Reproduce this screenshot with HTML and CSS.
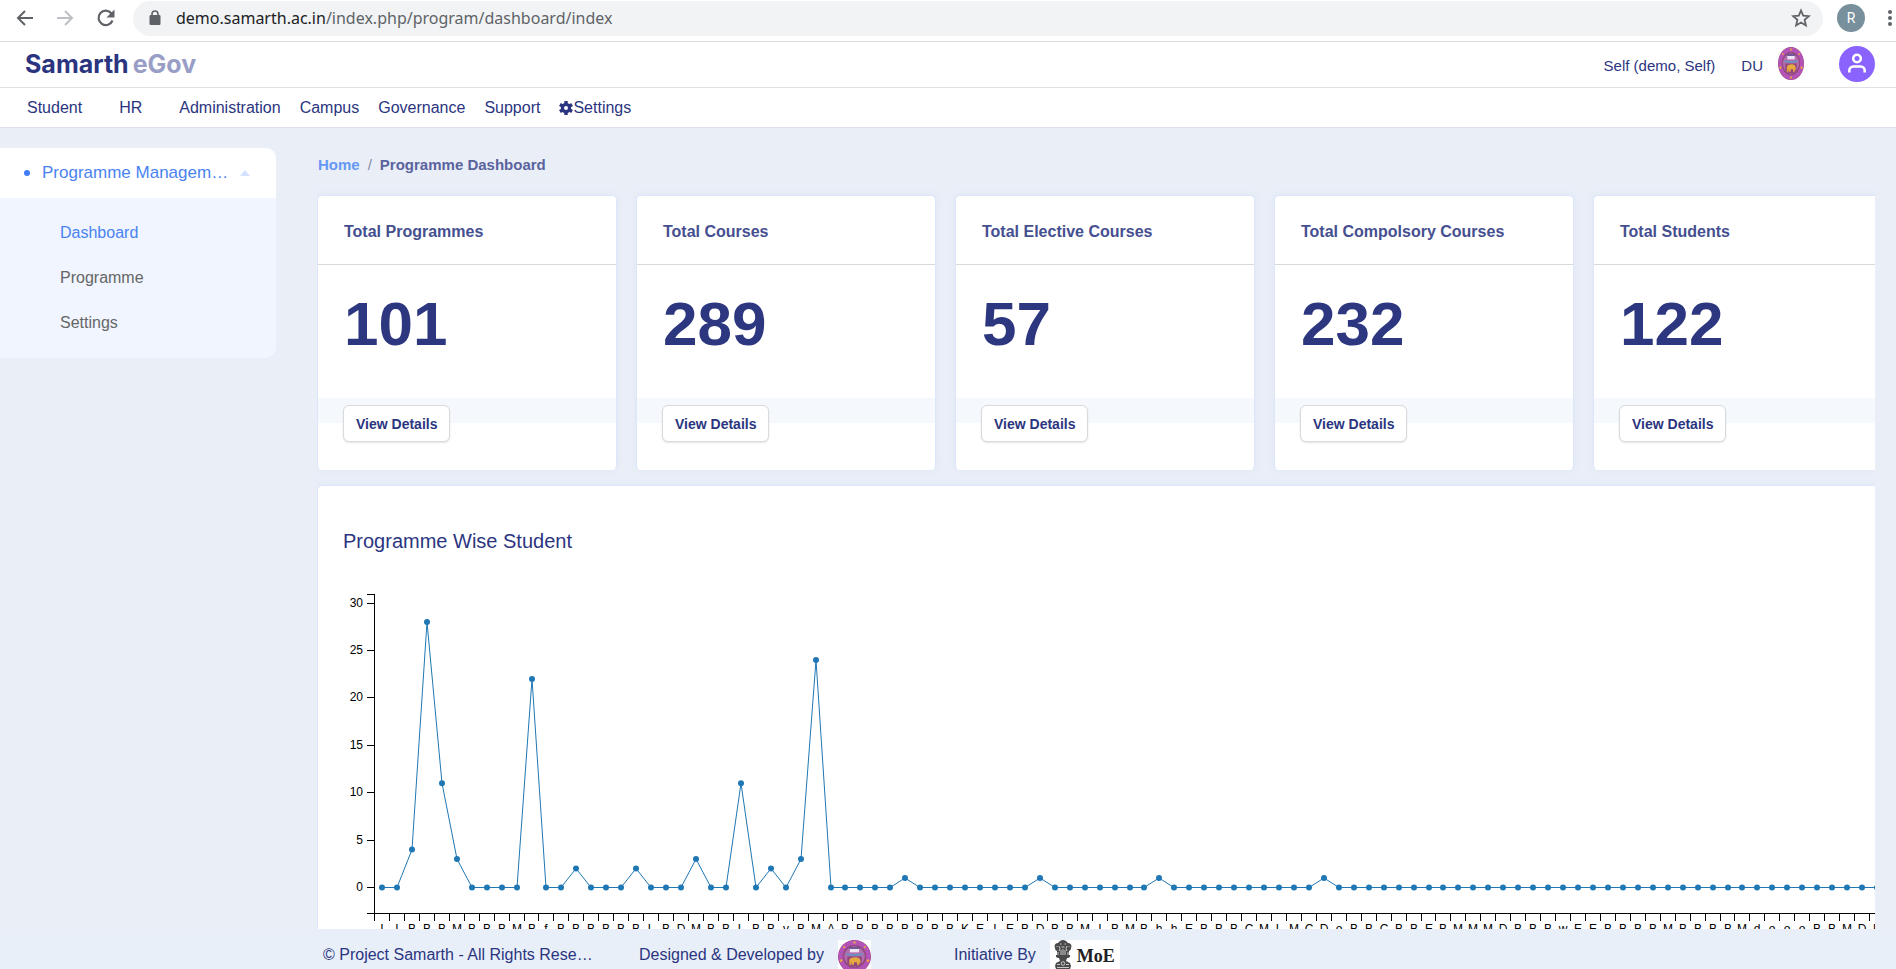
FILE: index.html
```html
<!DOCTYPE html>
<html lang="en">
<head>
<meta charset="utf-8">
<title>Programme Dashboard</title>
<link rel="stylesheet" href="styles.css">
</head>
<body>
<svg class="sprite" aria-hidden="true">
  <symbol id="crest" viewBox="0 0 32 32" preserveAspectRatio="none">
    <circle cx="16" cy="16" r="16" fill="#9a4a86"/>
    <circle cx="16" cy="16" r="13.500" fill="none" stroke="#c050bd" stroke-width="4"/>
    <circle cx="16" cy="16" r="13.500" fill="none" stroke="#9b5bb0" stroke-width="2" stroke-dasharray="1.500 1.500"/>
    <circle cx="16" cy="16" r="10.500" fill="#b56cae" stroke="#8b4a7c"/>
    <circle cx="16" cy="2.500" r="1.200" fill="#e0a050"/><circle cx="3" cy="20" r="1.300" fill="#e8a33a"/><circle cx="29" cy="20" r="1.300" fill="#e8a33a"/><circle cx="6" cy="7" r="1.100" fill="#e0a050"/><circle cx="26" cy="7" r="1.100" fill="#e0a050"/><circle cx="16" cy="29.500" r="1.200" fill="#e8a33a"/>
    <path d="M11.500 8.500h9v3.500h-9z" fill="#efe4f4"/><path d="M11 7h10v1.500H11z" fill="#5b4d8c"/>
    <path d="M8 12.500q8 2 16 0v2q-8 2-16 0z" fill="#6a93c0"/>
    <path d="M9 16h14v7q-7 5-14 0z" fill="#93467a"/>
    <path d="M11 24v-4.500q.5-2.500 4-2.500 5-1 6.500 2l.5 3-1.500.5V24h-2v-2.500h-3V24h-2v-3l-.8 3z" fill="#e5a93f"/>
  </symbol>
</svg>

<div class="browser">
  <button class="icon-btn" aria-label="Back"><svg width="18" height="18" viewBox="0 0 18 18" fill="none" stroke="#5f6368" stroke-width="2"><path d="M17 9H2M9 2L2 9l7 7"/></svg></button>
  <button class="icon-btn" aria-label="Forward"><svg width="18" height="18" viewBox="0 0 18 18" fill="none" stroke="#bdc1c6" stroke-width="2"><path d="M1 9h15M9 2l7 7-7 7"/></svg></button>
  <button class="icon-btn reload" aria-label="Reload"><svg width="20" height="20" viewBox="0 0 20 20"><path d="M16.500 12.500A7.200 7.200 0 1 1 15.500 5.500" fill="none" stroke="#5f6368" stroke-width="2.200"/><path d="M18.500 1.500v8h-8z" fill="#5f6368"/></svg></button>
  <div class="address">
    <svg width="12" height="16" viewBox="0 0 12 16"><rect x="0.500" y="5" width="11" height="10" rx="1.200" fill="#5f6368"/><path d="M3 6V4a3 3 0 0 1 6 0v2" fill="none" stroke="#5f6368" stroke-width="1.600"/></svg>
    <div class="url"><span class="host">demo.samarth.ac.in</span>/index.php/program/dashboard/index</div>
    <button class="icon-btn star" aria-label="Bookmark"><svg width="20" height="20" viewBox="0 0 20 20" fill="none" stroke="#5f6368" stroke-width="1.800"><path d="M10 2.500l2.200 5.200 5.600.5-4.200 3.700 1.300 5.500L10 14.500l-4.900 2.900 1.300-5.500L2.200 8.200l5.600-.5z"/></svg></button>
  </div>
  <div class="profile">R</div>
  <button class="icon-btn more" aria-label="Menu"><svg width="6" height="18" viewBox="0 0 6 18" fill="#5f6368"><circle cx="3" cy="3" r="2"/><circle cx="3" cy="9" r="2"/><circle cx="3" cy="15" r="2"/></svg></button>
</div>

<header class="topbar">
  <a class="brand" href="#"><span>Samarth</span><span class="brand-light">eGov</span></a>
  <div class="account">
    <span class="who">Self (demo, Self)</span>
    <span class="org">DU</span>
    <span class="org-logo"><svg width="26" height="33" viewBox="0 0 32 32" preserveAspectRatio="none" role="img" aria-label="DU crest"><use href="#crest"/></svg></span>
    <button class="avatar" aria-label="Account"><svg width="36" height="36" viewBox="0 0 36 36" fill="none" stroke="#fff" stroke-width="2.600"><circle cx="18" cy="12.500" r="3.800"/><path d="M10.300 26.500v-2a4 4 0 0 1 4-4h7.400a4 4 0 0 1 4 4v2"/></svg></button>
  </div>
</header>

<nav class="menu">
  <a class="wide" href="#">Student</a>
  <a class="wide" href="#">HR</a>
  <a href="#">Administration</a>
  <a href="#">Campus</a>
  <a href="#">Governance</a>
  <a href="#">Support</a>
  <a class="with-icon" href="#"><svg width="14" height="14" viewBox="0 0 14 14"><path fill="none" stroke="#2b357f" stroke-width="3.400" d="M7 0v14M.9 3.500l12.200 7M.9 10.500l12.200-7"/><circle cx="7" cy="7" r="3.600" fill="#fff" stroke="#2b357f" stroke-width="3.200"/></svg>Settings</a>
</nav>

<div class="layout">
  <aside class="sidebar">
    <button class="group" aria-expanded="true"><span class="dot"></span><span class="group-name">Programme Management</span><svg width="10" height="6" viewBox="0 0 10 6"><path d="M5 0l5 6H0z" fill="#d3e2ff"/></svg></button>
    <ul>
      <li><a class="active" href="#">Dashboard</a></li>
      <li><a href="#">Programme</a></li>
      <li><a href="#">Settings</a></li>
    </ul>
  </aside>

  <main>
    <div class="crumbs"><a href="#">Home</a><span class="slash">/</span><span>Programme Dashboard</span></div>
    <section class="cards">
      <article class="card"><h2>Total Programmes</h2><p class="count">101</p><div class="band"></div><button class="details">View Details</button></article>
      <article class="card"><h2>Total Courses</h2><p class="count">289</p><div class="band"></div><button class="details">View Details</button></article>
      <article class="card"><h2>Total Elective Courses</h2><p class="count">57</p><div class="band"></div><button class="details">View Details</button></article>
      <article class="card"><h2>Total Compolsory Courses</h2><p class="count">232</p><div class="band"></div><button class="details">View Details</button></article>
      <article class="card"><h2>Total Students</h2><p class="count">122</p><div class="band"></div><button class="details">View Details</button></article>
    </section>
    <section class="chart-card">
      <h2>Programme Wise Student</h2>
      <svg id="chart" width="1560" height="360" role="img" aria-label="Students per programme"></svg>
    </section>
  </main>
</div>

<footer>
  <div class="copy">© Project Samarth - All Rights Reserved</div>
  <div class="credit">Designed &amp; Developed by <span class="seal"><svg width="33" height="33" role="img" aria-label="University crest"><use href="#crest"/></svg></span></div>
  <div class="credit">Initiative By
    <span class="moe"><svg width="18" height="30" viewBox="0 0 18 30" aria-hidden="true"><g fill="#4a4a4a"><path d="M6 1q3-2 6 0l2 2q3 0 3.500 3l-1 4-1.500 1v5H3v-5L1.500 10 .5 6Q1 3 4 3z"/><path d="M2 15h14v2l-2 1H4l-2-1z"/><path d="M5 18h8l-1 3 4 2 1 3-1 3H2l-1-3 1-3 4-2z"/></g><g fill="none" stroke="#d8d8d8" stroke-width=".9"><path d="M6 4h1.500M10.500 4H12M7.500 7h3M5 6q2 3 0 5M13 6q-2 3 0 5M2.500 6l1 1M15.500 6l-1 1M7 10v5M9 9v6M11 10v5M4 12v3M14 12v3"/><circle cx="9" cy="23.500" r="1.800"/><path d="M3 24.500h3M12 24.500h3M3 27.500h12"/></g></svg>MoE</span>
  </div>
</footer>
<script src="chart.js"></script>
</body>
</html>
```

FILE: styles.css
```css
* { box-sizing: border-box; }
body { margin: 0; height: 100vh; display: flex; flex-direction: column; overflow: hidden; background: #e9eef7; color: #2b357f; font-family: "Liberation Sans", Arial, sans-serif; font-size: 16px; }
a { color: inherit; text-decoration: none; }
button { font: inherit; color: inherit; cursor: pointer; }
h2, p, ul { margin: 0; padding: 0; font-weight: normal; }
ul { list-style: none; }
svg { display: block; flex: none; }
.sprite { position: absolute; width: 0; height: 0; }

.browser { flex: none; height: 42px; display: flex; align-items: center; padding: 0 0 5px 16px; background: #fff; border-bottom: 1px solid #dadce0; }
.icon-btn { border: 0; background: none; padding: 0; width: 20px; margin-right: 20px; flex: none; }
.reload { margin-right: 17px; }
.address { flex: 1; height: 35px; min-width: 0; display: flex; align-items: center; margin-right: 14px; padding: 0 12px 0 16px; border-radius: 18px; background: #f1f3f4; }
.url { flex: 1; margin-left: 15px; font: 16px/24px "Noto Sans", sans-serif; color: #5f6368; white-space: nowrap; }
.host { color: #202124; }
.star { margin: 0; }
.profile { width: 28px; height: 28px; border-radius: 50%; background: #78909c; color: #fff; font: 14px/28px Roboto, sans-serif; text-align: center; }
.more { width: 6px; margin: 0 3px 0 22px; }

.topbar { flex: none; height: 46px; display: flex; align-items: center; justify-content: space-between; padding: 0 21px 2px 25px; background: #fff; border-bottom: 1px solid #dee0e4; }
.brand { display: flex; gap: 4px; font: 700 25px/32px Inter, sans-serif; color: #2b357f; }
.brand-light { color: #989ec6; }
.account { display: flex; align-items: center; font-size: 15px; }
.who, .org { padding-top: 4px; }
.org { margin-left: 26px; }
.org-logo { margin: 0 32px 0 12px; padding: 0 3px; }
.avatar { border: 0; padding: 0; width: 36px; height: 36px; border-radius: 50%; background: #8a63ff; }

.menu { flex: none; height: 40px; display: flex; align-items: center; gap: 19px; padding: 0 27px; background: #fff; border-bottom: 1px solid #dde2ea; }
.wide { margin-right: 18px; }
.with-icon { display: flex; align-items: center; }

.layout { flex: 1; min-height: 0; display: flex; overflow: hidden; }
.sidebar { flex: none; width: 276px; margin-top: 20px; align-self: flex-start; background: #f0f5ff; border-radius: 0 10px 10px 0; overflow: hidden; }
.group { display: flex; align-items: center; width: 100%; height: 50px; padding: 0 24px; border: 0; background: #fff; color: #4a83f0; font-size: 17px; text-align: left; }
.dot { width: 6px; height: 6px; border-radius: 50%; background: #3f7df5; margin-right: 12px; }
.group-name { width: 192px; margin-right: 6px; overflow: hidden; text-overflow: ellipsis; white-space: nowrap; }
.sidebar ul { padding: 12px 0 13px 60px; }
.sidebar li { line-height: 45px; color: #666; }
.sidebar .active { color: #4a83f0; }

main { flex: 1; min-width: 0; margin: 0 21px 0 41px; overflow: hidden; }
.crumbs { display: flex; padding: 28px 0 0 1px; margin-bottom: 21px; font-weight: bold; font-size: 15px; line-height: 18px; color: #5a639e; }
.crumbs a { color: #6598f4; }
.slash { margin: 0 8px; font-weight: normal; color: #868ca5; }
.cards { display: flex; gap: 19px; margin-bottom: 15px; }
.card { flex: 0 0 300px; padding-bottom: 27px; background: #fff; border: 1px solid #dce7fb; border-bottom-color: #fff; border-radius: 5px; box-shadow: 0 0 6px #dfe7f4; }
.card h2 { padding: 26px 26px 22px; font-size: 16px; line-height: 20px; font-weight: bold; color: #454f90; border-bottom: 1px solid #d8d9dc; }
.count { padding: 23px 26px 38px; font-size: 62px; line-height: 72px; font-weight: bold; color: #2d3780; }
.band { height: 25px; margin-bottom: -18px; background: #f5f8fd; }
.details { display: block; position: relative; margin-left: 25px; height: 37px; padding: 0 12px; border: 1px solid #d9dadd; border-radius: 6px; background: #fff; box-shadow: 0 1px 2px #e4e4e4; font-size: 14px; font-weight: bold; }
.chart-card { width: 1620px; padding: 43px 25px 24px; background: #fff; border: 1px solid #dce7fb; border-radius: 5px; box-shadow: 0 0 6px #dfe7f4; }
.chart-card h2 { font-size: 20px; line-height: 24px; }
#chart { margin-top: 41px; font-size: 12px; }
.axis { fill: none; stroke: #000; shape-rendering: crispEdges; }
.series { fill: none; stroke: #1f77b4; }
.point { fill: #1f77b4; }
.y-label { text-anchor: end; }
.x-label { text-anchor: middle; }

footer { flex: none; height: 40px; display: grid; grid-template-columns: 316px 315px 1fr; padding: 11px 21px 0 323px; overflow: hidden; background: #e8eff9; line-height: 30px; }
.copy { width: 272px; overflow: hidden; text-overflow: ellipsis; white-space: nowrap; }
.credit { display: flex; gap: 14px; white-space: nowrap; }
.seal { flex: none; width: 33px; height: 33px; background: #fff; }
.moe { display: flex; gap: 5px; width: 70px; height: 34px; padding-left: 4px; background: #fff; color: #222; font: bold 18px/32px "Liberation Serif", serif; }
```

FILE: chart.js
```js
const labels = 'IIBBBMBBBMBfBBBBBBLBDMBBLBBvBMABBBBBBBBKEIEBDBBMIBMBhhEBBBCMLMCDoBBCBBEBMMMDBBBwEEBBBBMBBBBMdoooBBMDB';
const counts = { 2: 4, 3: 28, 4: 11, 5: 3, 10: 22, 13: 2, 17: 2, 21: 3, 24: 11, 26: 2, 28: 3, 29: 24, 35: 1, 44: 1, 52: 1, 63: 1 };
const left = 31, base = 319, zero = 293, step = 14.95, unit = 9.48;
const chart = document.getElementById('chart');

function add(tag, attrs, text) {
  const el = document.createElementNS('http://www.w3.org/2000/svg', tag);
  for (const key in attrs) el.setAttribute(key, attrs[key]);
  if (text) el.textContent = text;
  chart.appendChild(el);
}

add('path', { class: 'axis', d: `M${left - 7} 0.5H${left + 0.5}V${base}` });
add('path', { class: 'axis', d: `M${left - 7} ${base + 0.5}H1560` });
for (let v = 0; v <= 30; v += 5) {
  const y = Math.round(zero - v * unit);
  add('path', { class: 'axis', d: `M${left - 7} ${y + 0.5}h7` });
  add('text', { class: 'y-label', x: left - 11, y: y + 4 }, String(v));
}
const points = [...labels].map((letter, i) => {
  const tick = left + Math.round(i * step);
  add('path', { class: 'axis', d: `M${tick + 0.5} ${base}v8` });
  add('text', { class: 'x-label', x: tick + 8, y: base + 20 }, letter);
  return [tick + 8, zero + 0.5 - (counts[i] || 0) * unit];
});
add('polyline', { class: 'series', points: points.join(' ') });
points.forEach(([cx, cy]) => add('circle', { class: 'point', cx, cy, r: 3 }));
```
